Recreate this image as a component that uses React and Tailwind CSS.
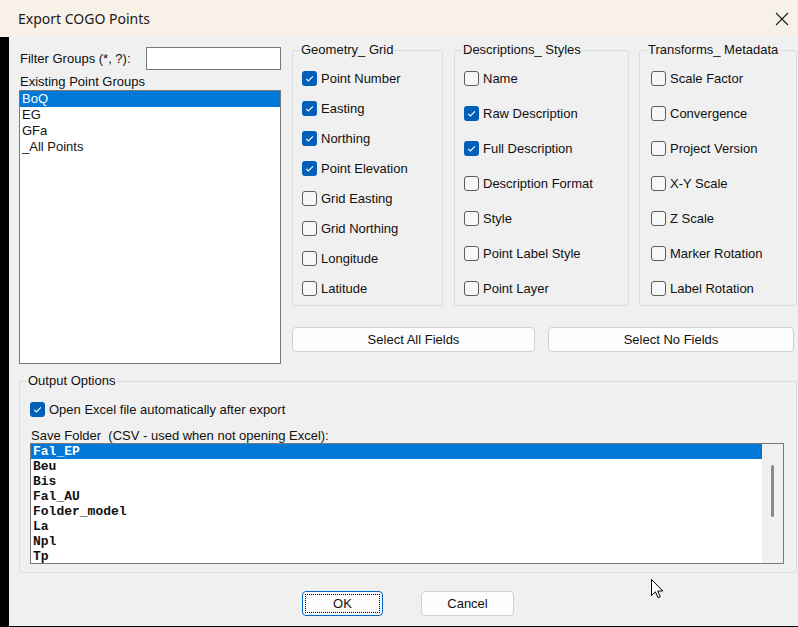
import React from "react";

const geometry = [
  ["Point Number", true],
  ["Easting", true],
  ["Northing", true],
  ["Point Elevation", true],
  ["Grid Easting", false],
  ["Grid Northing", false],
  ["Longitude", false],
  ["Latitude", false],
];

const descriptions = [
  ["Name", false],
  ["Raw Description", true],
  ["Full Description", true],
  ["Description Format", false],
  ["Style", false],
  ["Point Label Style", false],
  ["Point Layer", false],
];

const transforms = [
  ["Scale Factor", false],
  ["Convergence", false],
  ["Project Version", false],
  ["X-Y Scale", false],
  ["Z Scale", false],
  ["Marker Rotation", false],
  ["Label Rotation", false],
];

const pointGroups = ["BoQ", "EG", "GFa", "_All Points"];
const folders = ["Fal_EP", "Beu", "Bis", "Fal_AU", "Folder_model", "La", "Npl", "Tp"];

function Check({ checked }) {
  if (checked) {
    return (
      <span className="w-[15px] h-[15px] rounded-[3px] bg-[#005fb8] flex items-center justify-center shrink-0">
        <svg width="15" height="15" viewBox="0 0 15 15">
          <path d="M4.2 7.9 L6.4 10 L10.9 5.3" fill="none" stroke="#ffffff" strokeWidth="1.1" />
        </svg>
      </span>
    );
  }
  return <span className="w-[15px] h-[15px] rounded-[3px] border border-[#5c5c5c] bg-[#f7f7f7] shrink-0" />;
}

function CheckRow({ label, checked }) {
  return (
    <div className="flex items-center h-[15px]">
      <Check checked={checked} />
      <span className="ml-[4px] leading-[15px] whitespace-nowrap">{label}</span>
    </div>
  );
}

function Group({ title, className, children }) {
  return (
    <div className={"relative border border-[#dcdcdc] rounded-[2px] " + className}>
      <span className="absolute -top-[9px] left-[7px] px-[1px] bg-[#f0f0f0] leading-[16px] whitespace-nowrap">
        {title}
      </span>
      {children}
    </div>
  );
}

function Button({ children, className }) {
  return (
    <div
      className={
        "h-[25px] flex items-center justify-center bg-[#fdfdfd] border border-[#cfcfcf] rounded-[4px] " + className
      }
    >
      {children}
    </div>
  );
}

export default function App() {
  return (
    <div className="w-[798px] h-[627px] bg-[#f0f0f0] flex flex-col overflow-hidden relative text-[13px] text-[#111] font-['Liberation_Sans',Arial,sans-serif]">
      {/* title bar */}
      <div className="h-[37px] bg-[#f8f1e7] flex items-center justify-between pl-[18px] pr-[8px] shrink-0">
        <span className="text-[14px] font-['Noto_Sans',sans-serif] text-[#1a1a1a]">Export COGO Points</span>
        <svg width="14" height="14" viewBox="0 0 14 14" className="mr-[1px]">
          <path d="M1 1 L13 13 M13 1 L1 13" stroke="#1a1a1a" strokeWidth="1.1" />
        </svg>
      </div>

      <div className="flex-1 flex flex-col border-l-[9px] border-b border-black">
        <div className="flex pl-[10px]">
          {/* point groups */}
          <div className="w-[262px] flex flex-col">
            <div className="mt-[10px] h-[23px] flex items-center justify-between">
              <span className="pl-[1px]">Filter Groups (*, ?):</span>
              <div className="w-[135px] h-[23px] bg-white border border-[#7a7a7a]" />
            </div>
            <div className="mt-[4px] h-[16px] leading-[16px] pl-[1px]">Existing Point Groups</div>
            <div className="h-[274px] bg-white border border-[#7a7a7a] flex flex-col">
              {pointGroups.map((g, i) => (
                <div
                  key={g}
                  className={
                    i === 0
                      ? "h-[16px] leading-[16px] pl-[2px] bg-[#0078d7] text-white"
                      : "h-[16px] leading-[16px] pl-[2px]"
                  }
                >
                  {g}
                </div>
              ))}
            </div>
          </div>

          {/* field groups */}
          <div className="ml-[11px] flex flex-col pt-[13px]">
            <div className="flex h-[256px]">
              <Group title="Geometry_ Grid" className="w-[151px] pl-[9px] pt-[20px]">
                <div className="flex flex-col gap-[15px]">
                  {geometry.map(([l, c]) => (
                    <CheckRow key={l} label={l} checked={c} />
                  ))}
                </div>
              </Group>
              <Group title="Descriptions_ Styles" className="ml-[11px] w-[175px] pl-[9px] pt-[20px]">
                <div className="flex flex-col gap-[20px]">
                  {descriptions.map(([l, c]) => (
                    <CheckRow key={l} label={l} checked={c} />
                  ))}
                </div>
              </Group>
              <Group title="Transforms_ Metadata" className="ml-[10px] w-[158px] pl-[11px] pt-[20px]">
                <div className="flex flex-col gap-[20px]">
                  {transforms.map(([l, c]) => (
                    <CheckRow key={l} label={l} checked={c} />
                  ))}
                </div>
              </Group>
            </div>
            <div className="flex mt-[21px]">
              <Button className="w-[243px]">Select All Fields</Button>
              <Button className="ml-[13px] w-[246px]">Select No Fields</Button>
            </div>
          </div>
        </div>

        {/* output options */}
        <Group title="Output Options" className="mt-[17px] ml-[10px] w-[778px] h-[192px] pl-[10px] pt-[20px]">
          <CheckRow label="Open Excel file automatically after export" checked={true} />
          <div className="mt-[11px] h-[15px] leading-[15px] pl-[1px] whitespace-pre">
            Save Folder  (CSV - used when not opening Excel):
          </div>
          <div className="w-[754px] h-[121px] bg-white border border-[#7a7a7a] flex">
            <div className="flex-1 flex flex-col font-['Liberation_Mono',monospace] font-bold">
              {folders.map((f, i) => (
                <div
                  key={f}
                  className={
                    i === 0
                      ? "h-[15px] leading-[15px] pl-[2px] bg-[#0078d7] text-white"
                      : "h-[15px] leading-[15px] pl-[2px]"
                  }
                >
                  {f}
                </div>
              ))}
            </div>
            <div className="w-[21px] bg-[#f0f0f0] flex justify-center pt-[21px]">
              <div className="w-[3px] h-[52px] rounded-full bg-[#8a8a8a]" />
            </div>
          </div>
        </Group>

        {/* dialog buttons */}
        <div className="flex mt-[18px] ml-[293px]">
          <div className="w-[81px] h-[25px] p-[2px] bg-[#fdfdfd] border border-[#0067c0] rounded-[4px] flex">
            <div className="flex-1 border border-dotted border-black flex items-center justify-center">OK</div>
          </div>
          <Button className="ml-[38px] w-[93px]">Cancel</Button>
        </div>
      </div>

      {/* mouse pointer */}
      <svg width="13" height="20" viewBox="0 0 13 20" className="absolute left-[651px] top-[579px]">
        <path
          d="M0.5 0.5 L0.5 16.5 L4.4 12.8 L7 18.7 L9.3 17.7 L6.8 12 L11.8 12 Z"
          fill="#ffffff"
          stroke="#000000"
          strokeWidth="1"
          strokeLinejoin="miter"
        />
      </svg>
    </div>
  );
}
